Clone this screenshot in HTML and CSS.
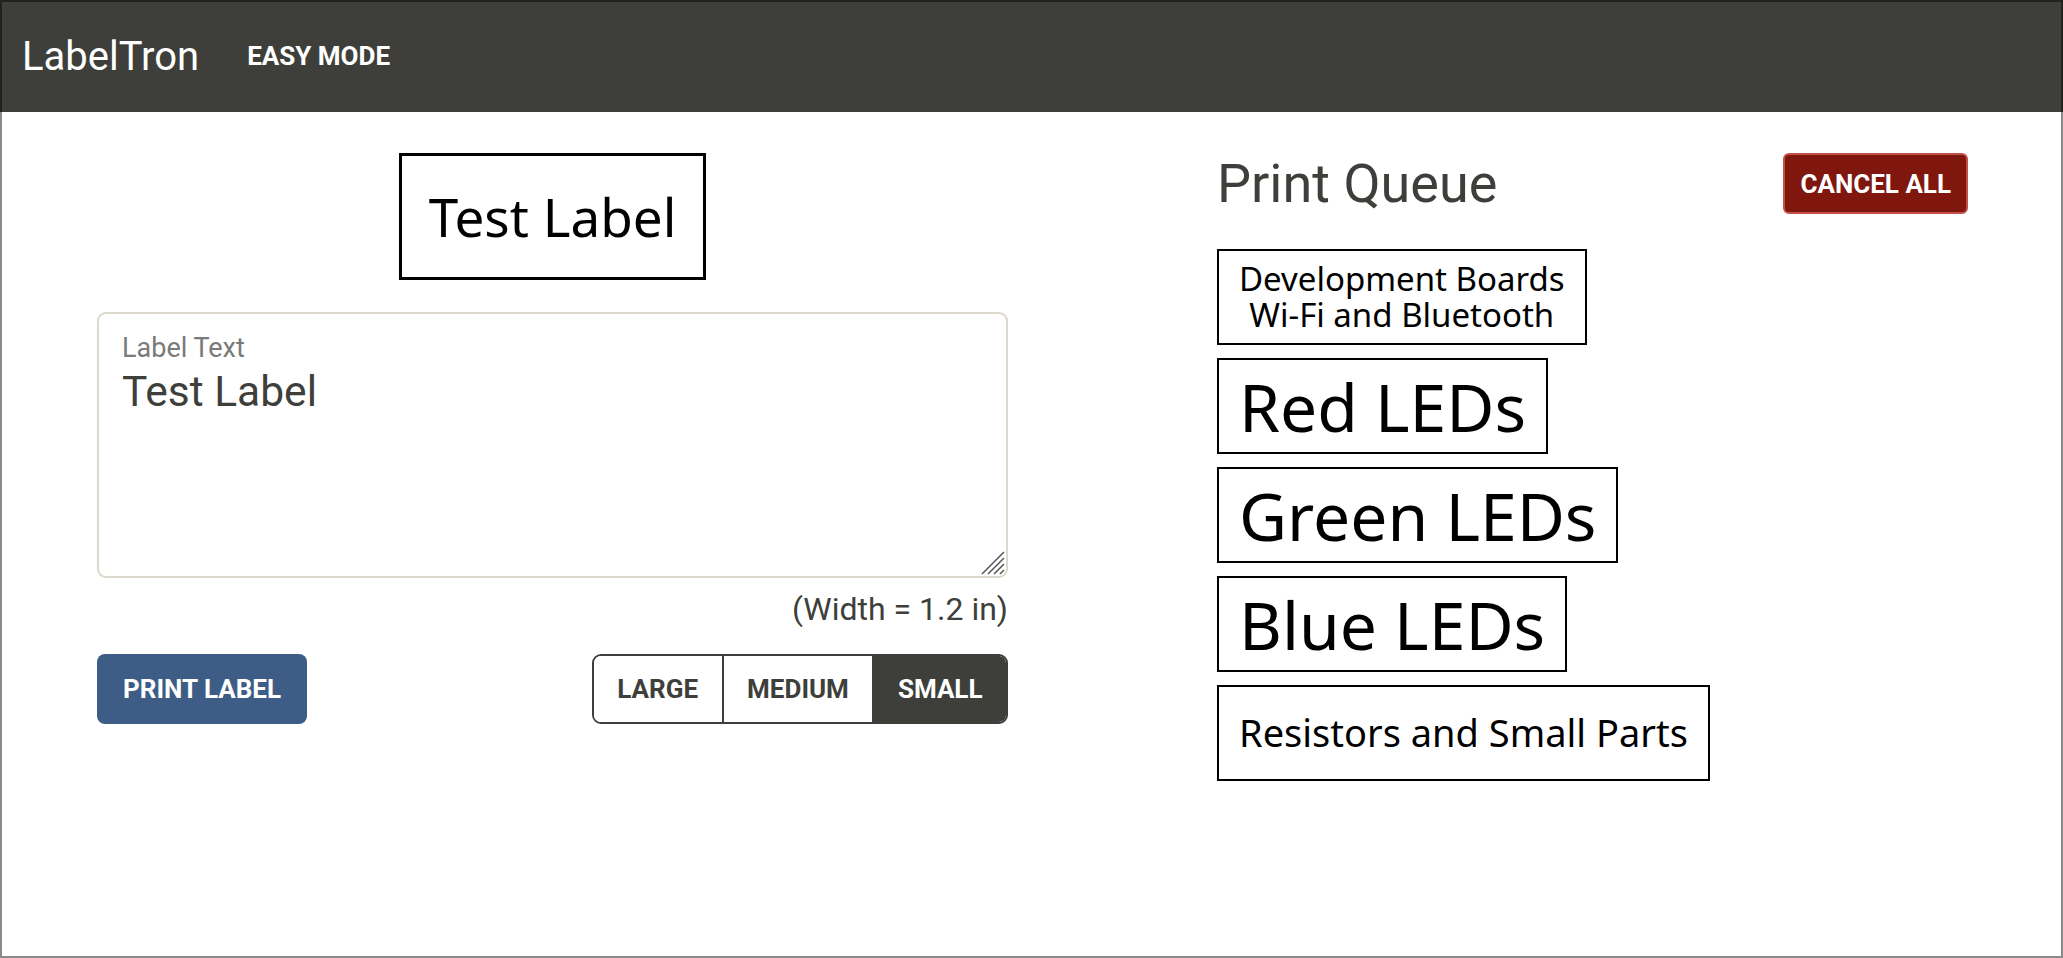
FILE: index.html
```html
<!DOCTYPE html>
<html lang="en">
<head>
<meta charset="utf-8">
<title>LabelTron</title>
<link rel="stylesheet" href="styles.css">
</head>
<body>
<header class="topbar">
  <span class="brand">LabelTron</span>
  <a class="mode">EASY MODE</a>
</header>
<main class="main">
  <section class="editor">
    <div class="preview"><span>Test Label</span></div>
    <div class="field">
      <span class="field-label">Label Text</span>
      <div class="field-value">Test Label</div>
      <svg class="grip" width="26" height="26" viewBox="0 0 26 26">
        <path d="M3 25 L25 3 M9 25 L25 9 M15 25 L25 15 M21 25 L25 21" stroke="#5a5a5a" stroke-width="1.6" fill="none"/>
      </svg>
    </div>
    <div class="width-note">(Width = 1.2 in)</div>
    <div class="actions">
      <button class="btn-print">PRINT LABEL</button>
      <div class="seg">
        <button class="seg-btn">LARGE</button>
        <button class="seg-btn">MEDIUM</button>
        <button class="seg-btn active">SMALL</button>
      </div>
    </div>
  </section>
  <section class="queue">
    <div class="queue-head">
      <h2 class="queue-title">Print Queue</h2>
      <button class="btn-cancel">CANCEL ALL</button>
    </div>
    <div class="queue-list">
      <div class="qlabel q-sm"><span class="qline">Development Boards</span><span class="qline">Wi-Fi and Bluetooth</span></div>
      <div class="qlabel q-xl"><span>Red LEDs</span></div>
      <div class="qlabel q-xl"><span>Green LEDs</span></div>
      <div class="qlabel q-xl"><span>Blue LEDs</span></div>
      <div class="qlabel q-md"><span>Resistors and Small Parts</span></div>
    </div>
  </section>
</main>
<div class="frame"></div>
</body>
</html>
```
FILE: styles.css
```css
html, body {
  margin: 0;
  padding: 0;
}
body {
  width: 2063px;
  height: 958px;
  overflow: hidden;
  background: #fff;
  font-family: Roboto, "Liberation Sans", sans-serif;
  color: #3e3f3a;
}
.frame {
  position: fixed;
  inset: 0;
  border: 2px solid rgba(0, 0, 0, 0.46);
  pointer-events: none;
}
.topbar {
  height: 112px;
  background: #3e3f3a;
  display: flex;
  align-items: center;
  padding-left: 22px;
  box-sizing: border-box;
}
.brand {
  color: #fff;
  font-size: 40px;
  font-weight: 400;
}
.mode {
  color: #fff;
  font-size: 26px;
  font-weight: 700;
  margin-left: 48px;
}
.main {
  display: grid;
  grid-template-columns: 911px 751px;
  column-gap: 209px;
  padding: 41px 0 0 97px;
}
.editor {
  display: flex;
  flex-direction: column;
  align-items: center;
}
.preview {
  height: 127px;
  box-sizing: border-box;
  border: 3px solid #000;
  padding: 0 27px;
  display: flex;
  align-items: center;
  font-family: "Noto Sans", sans-serif;
  font-size: 53px;
  color: #000;
}
.field {
  align-self: stretch;
  position: relative;
  margin-top: 32px;
  height: 266px;
  box-sizing: border-box;
  border: 2px solid #dcd8ce;
  border-radius: 9px;
  padding: 18px 23px;
  display: flex;
  flex-direction: column;
}
.field-label {
  font-size: 27px;
  color: #7a7a78;
}
.field-value {
  margin-top: 3px;
  font-size: 42.5px;
  color: #3e3f3a;
}
.grip {
  position: absolute;
  right: 1px;
  bottom: 1px;
}
.width-note {
  align-self: flex-end;
  margin-top: 12px;
  font-size: 32px;
  color: #3e3f3a;
}
.actions {
  align-self: stretch;
  display: flex;
  justify-content: space-between;
  margin-top: 26px;
}
button {
  font-family: Roboto, "Liberation Sans", sans-serif;
  font-size: 26px;
  font-weight: 700;
  cursor: pointer;
}
.btn-print {
  height: 70px;
  padding: 0 26px;
  background: #3d5d86;
  color: #fff;
  border: none;
  border-radius: 8px;
}
.seg {
  display: flex;
  height: 70px;
  box-sizing: border-box;
  border: 2px solid #3e3f3a;
  border-radius: 9px;
  overflow: hidden;
}
.seg-btn {
  background: #fff;
  color: #3e3f3a;
  border: none;
  padding: 0 23.5px;
}
.seg-btn + .seg-btn {
  border-left: 2px solid #3e3f3a;
}
.seg-btn.active {
  background: #3e3f3a;
  color: #fff;
}
.queue-head {
  display: flex;
  align-items: center;
  justify-content: space-between;
  height: 61px;
}
.queue-title {
  margin: 0;
  font-size: 54px;
  font-weight: 400;
  line-height: 61px;
  color: #3e3f3a;
}
.btn-cancel {
  height: 61px;
  padding: 0 15px;
  background: #80170f;
  color: #fff;
  border: 2px solid #c4504a;
  border-radius: 6px;
}
.queue-list {
  margin-top: 35px;
  display: flex;
  flex-direction: column;
  align-items: flex-start;
  gap: 13px;
}
.qlabel {
  height: 96px;
  box-sizing: border-box;
  border: 2px solid #000;
  padding: 0 20px;
  display: flex;
  flex-direction: column;
  justify-content: center;
  align-items: center;
  font-family: "Noto Sans", sans-serif;
  color: #000;
}
.q-xl {
  font-size: 66px;
  line-height: 1;
}
.q-md {
  font-size: 38px;
  line-height: 1.1;
}
.q-sm {
  font-size: 33px;
}
.qline {
  display: block;
  height: 36px;
  line-height: 36px;
}
```
